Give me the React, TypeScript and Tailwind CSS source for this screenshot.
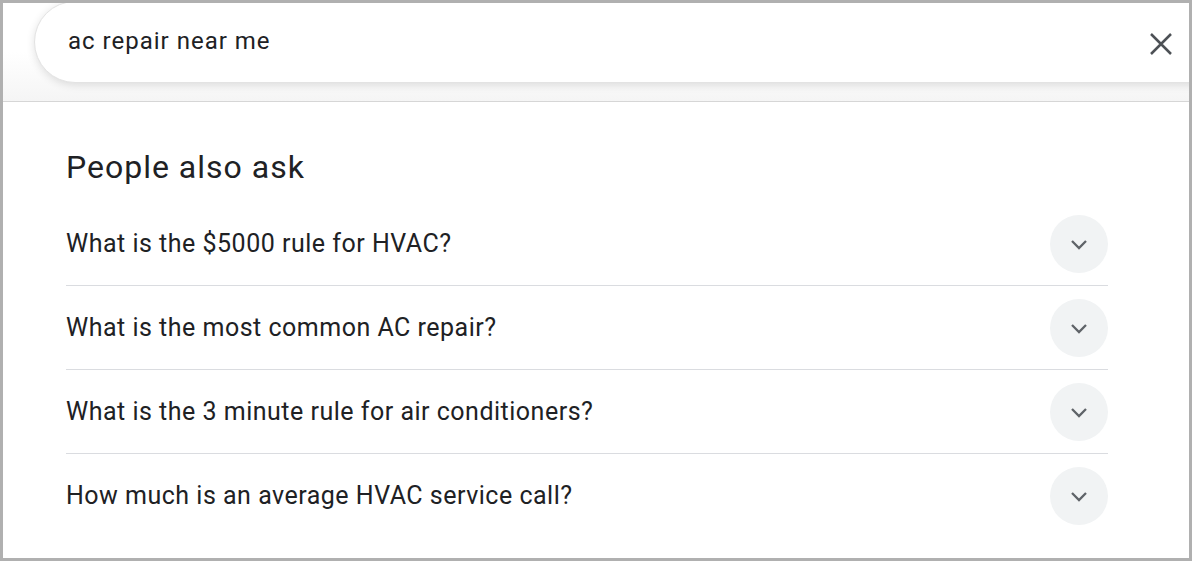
import React from "react";

const questions = [
  "What is the $5000 rule for HVAC?",
  "What is the most common AC repair?",
  "What is the 3 minute rule for air conditioners?",
  "How much is an average HVAC service call?",
];

function Chevron() {
  return (
    <svg width="20" height="20" viewBox="0 0 20 20" fill="none">
      <path d="M3 7 L10 14 L17 7" stroke="#5f6368" strokeWidth="2.3" strokeLinecap="butt" strokeLinejoin="miter" />
    </svg>
  );
}

export default function App() {
  return (
    <div
      className="w-[1192px] h-[561px] bg-white border-[3px] border-[#b0b0b0] overflow-hidden flex flex-col"
      style={{ fontFamily: "Roboto, 'Liberation Sans', Arial, sans-serif" }}
    >
      <div className="relative h-[99px] bg-gradient-to-b from-white via-white to-[#f5f5f5] border-b border-[#d6d6d6] shrink-0">
        <div className="absolute left-[31px] right-[-40px] top-[-2px] h-[82px] rounded-l-full bg-white border border-[#e3e3e3] shadow-[0_2px_8px_rgba(0,0,0,0.12)] flex items-center pl-[33px]">
          <span className="text-[24px] text-[#202124] tracking-[1px] pb-[2px]">ac repair near me</span>
        </div>
        <div className="absolute right-[15px] top-[28px] w-[26px] h-[26px] flex items-center justify-center">
          <svg width="24" height="24" viewBox="0 0 24 24">
            <path d="M2 2 L22 22 M22 2 L2 22" stroke="#4d5156" strokeWidth="2.5" />
          </svg>
        </div>
      </div>
      <div className="pl-[63px] pr-[81px] pt-[45px]">
        <h2 className="text-[32px] leading-[40px] text-[#202124] font-normal tracking-[1px]">People also ask</h2>
        <div className="mt-[15px]">
          {questions.map((q, i) => (
            <div
              key={i}
              className={`flex items-center justify-between h-[84px] ${i < questions.length - 1 ? "border-b border-[#dadce0]" : ""}`}
            >
              <span className="text-[25px] text-[#202124] tracking-[0.5px]">{q}</span>
              <div className="w-[58px] h-[58px] rounded-full bg-[#f1f3f4] flex items-center justify-center">
                <Chevron />
              </div>
            </div>
          ))}
        </div>
      </div>
    </div>
  );
}
